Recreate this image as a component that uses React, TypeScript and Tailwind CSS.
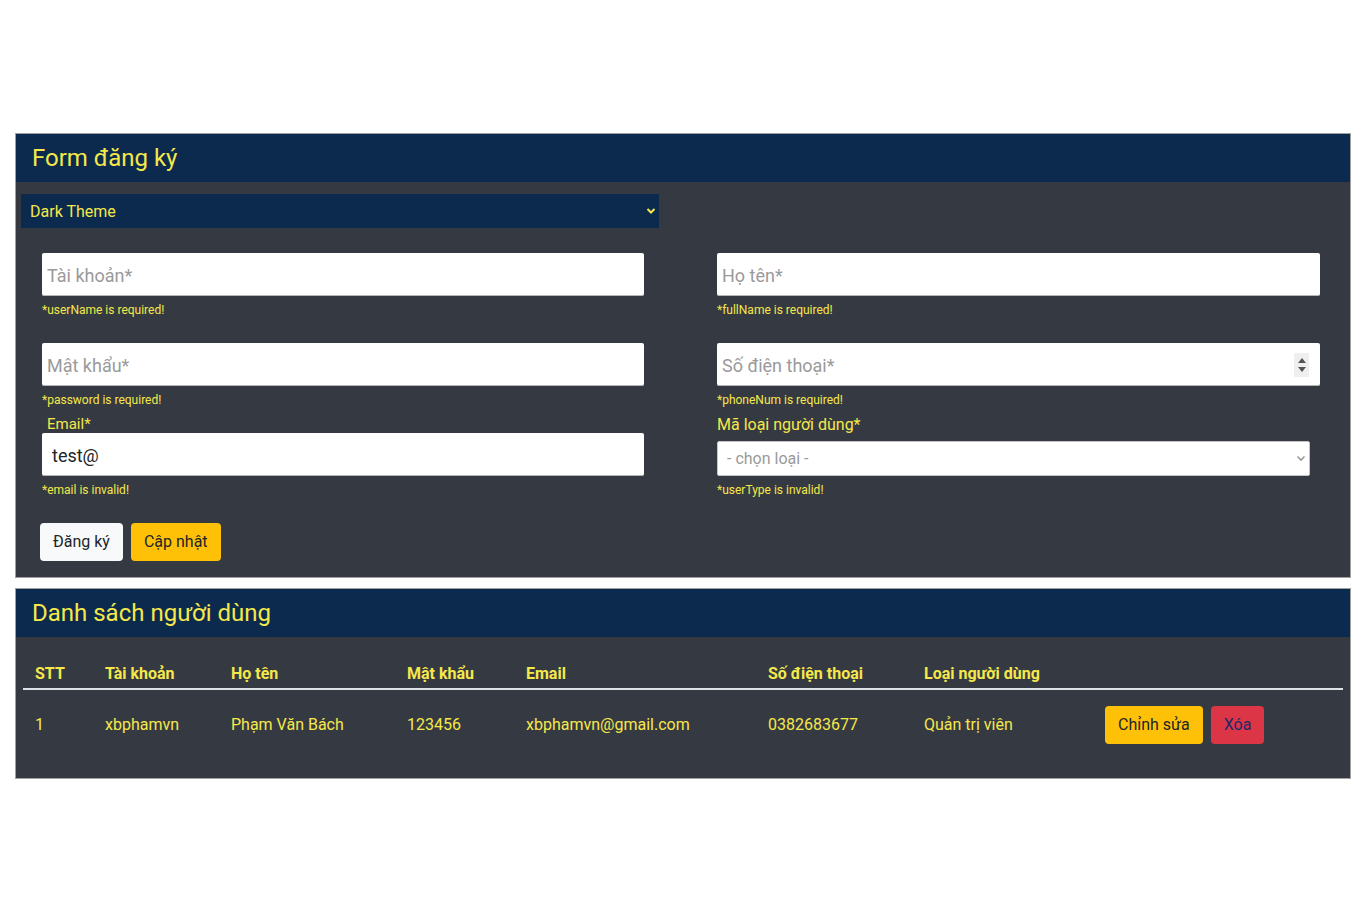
import React from "react";

const yellow = "text-[#f5e84a]";

interface FieldProps {
  placeholder: string;
  error: string;
  spinner?: boolean;
}

const Field: React.FC<FieldProps> = ({ placeholder, error, spinner }) => (
  <div className="flex flex-col">
    <div className="relative">
      <input
        className="w-full h-[43px] bg-white rounded-[2px] border-b border-[#b5b5b5] px-[5px] pt-[2px] text-[18px] text-[#212529] placeholder:text-[#9a9a9a] outline-none"
        placeholder={placeholder}
      />
      {spinner && (
        <div className="absolute right-[11px] top-[10px] w-[15px] h-[24px] bg-[#efefef] flex flex-col items-center justify-center gap-[4px]">
          <svg width="8" height="5" viewBox="0 0 8 5">
            <path d="M0 5 L4 0 L8 5 Z" fill="#555" />
          </svg>
          <svg width="8" height="5" viewBox="0 0 8 5">
            <path d="M0 0 L4 5 L8 0 Z" fill="#555" />
          </svg>
        </div>
      )}
    </div>
    <p className={`mt-[6px] text-[12px] leading-[16px] ${yellow}`}>{error}</p>
  </div>
);

const columns = [
  { title: "STT", w: "w-[70px]" },
  { title: "Tài khoản", w: "w-[126px]" },
  { title: "Họ tên", w: "w-[176px]" },
  { title: "Mật khẩu", w: "w-[119px]" },
  { title: "Email", w: "w-[242px]" },
  { title: "Số điện thoại", w: "w-[156px]" },
  { title: "Loại người dùng", w: "w-[181px]" },
  { title: "", w: "" },
];

const users = [
  {
    stt: 1,
    taiKhoan: "xbphamvn",
    hoTen: "Phạm Văn Bách",
    matKhau: "123456",
    email: "xbphamvn@gmail.com",
    soDt: "0382683677",
    loai: "Quản trị viên",
  },
];

export default function App() {
  return (
    <div
      className="min-h-[911px] bg-white pt-[133px] px-[15px]"
      style={{ fontFamily: "Roboto, 'Noto Sans', sans-serif" }}
    >
      {/* Form card */}
      <div className="border border-[#a0a0a0] bg-[#353a42]">
        <div className="h-[48px] bg-[#0b2a4e] flex items-center pl-[16px]">
          <h3 className={`text-[24px] ${yellow}`}>Form đăng ký</h3>
        </div>
        <div className="pt-[12px] pb-[16px]">
          <div className="pl-[5px]">
            <div className="relative w-[638px]">
              <select
                className={`appearance-none w-full h-[34px] bg-[#0b2a4e] pl-[9px] pt-[1px] text-[16px] outline-none ${yellow}`}
              >
                <option>Dark Theme</option>
              </select>
              <svg
                className="absolute right-[3px] top-[13px]"
                width="10"
                height="8"
                viewBox="0 0 10 8"
              >
                <path d="M1.5 2 L5 5.5 L8.5 2" stroke="#f5e84a" strokeWidth="2" fill="none" />
              </svg>
            </div>
          </div>

          <div className="grid grid-cols-[602px_603px] gap-x-[73px] pl-[26px] mt-[25px]">
            <div className="flex flex-col">
              <Field placeholder="Tài khoản*" error="*userName is required!" />
              <div className="mt-[25px]">
                <Field placeholder="Mật khẩu*" error="*password is required!" />
              </div>
              <label className={`mt-[7px] pl-[5px] text-[15px] leading-[18px] ${yellow}`}>Email*</label>
              <input
                className="w-full h-[43px] bg-white rounded-[2px] border-b border-[#b5b5b5] px-[10px] pt-[2px] text-[18px] text-[#212529] outline-none"
                defaultValue="test@"
              />
              <p className={`mt-[6px] text-[12px] leading-[16px] ${yellow}`}>*email is invalid!</p>
            </div>
            <div className="flex flex-col">
              <Field placeholder="Họ tên*" error="*fullName is required!" />
              <div className="mt-[25px]">
                <Field placeholder="Số điện thoại*" error="*phoneNum is required!" spinner />
              </div>
              <label className={`mt-[5px] text-[16px] leading-[24px] ${yellow}`}>Mã loại người dùng*</label>
              <div className="relative mt-[4px] w-[593px]">
                <select className="appearance-none w-full h-[35px] bg-white border border-[#c4c4c4] rounded-[2px] pl-[9px] text-[16px] text-[#9a9a9a] outline-none">
                  <option>- chọn loại -</option>
                </select>
                <svg
                  className="absolute right-[4px] top-[14px]"
                  width="10"
                  height="7"
                  viewBox="0 0 10 7"
                >
                  <path d="M1.5 1.5 L5 5 L8.5 1.5" stroke="#999" strokeWidth="1.6" fill="none" />
                </svg>
              </div>
              <p className={`mt-[6px] text-[12px] leading-[16px] ${yellow}`}>*userType is invalid!</p>
            </div>
          </div>

          <div className="flex gap-[8px] pl-[24px] mt-[25px]">
            <button className="h-[38px] px-[13px] rounded-[4px] bg-[#f8f9fa] text-[16px] text-[#212529]">
              Đăng ký
            </button>
            <button className="h-[38px] px-[13px] rounded-[4px] bg-[#ffc107] text-[16px] text-[#212529]">
              Cập nhật
            </button>
          </div>
        </div>
      </div>

      {/* List card */}
      <div className="mt-[10px] border border-[#a0a0a0] bg-[#353a42]">
        <div className="h-[48px] bg-[#0b2a4e] flex items-center pl-[16px]">
          <h3 className={`text-[24px] ${yellow}`}>Danh sách người dùng</h3>
        </div>
        <div className="pt-[12px] pb-[18px] px-[7px]">
          <table className={`w-full text-left text-[16px] ${yellow}`}>
            <thead>
              <tr className="border-b-2 border-[#dee2e6]">
                {columns.map((c, i) => (
                  <th key={i} className={`${c.w} px-[12px] pt-[13px] pb-[2px] leading-[24px] font-bold`}>
                    {c.title}
                  </th>
                ))}
              </tr>
            </thead>
            <tbody>
              {users.map((u) => (
                <tr key={u.stt}>
                  <td className="px-[12px] py-[16px]">{u.stt}</td>
                  <td className="px-[12px] py-[16px]">{u.taiKhoan}</td>
                  <td className="px-[12px] py-[16px]">{u.hoTen}</td>
                  <td className="px-[12px] py-[16px]">{u.matKhau}</td>
                  <td className="px-[12px] py-[16px]">{u.email}</td>
                  <td className="px-[12px] py-[16px]">{u.soDt}</td>
                  <td className="px-[12px] py-[16px]">{u.loai}</td>
                  <td className="px-[12px] py-[16px]">
                    <div className="flex gap-[8px]">
                      <button className="h-[38px] px-[13px] rounded-[4px] bg-[#ffc107] text-[#212529]">
                        Chỉnh sửa
                      </button>
                      <button className="h-[38px] px-[13px] rounded-[4px] bg-[#dc3545] text-[#1b2a6b]">
                        Xóa
                      </button>
                    </div>
                  </td>
                </tr>
              ))}
            </tbody>
          </table>
        </div>
      </div>
    </div>
  );
}
